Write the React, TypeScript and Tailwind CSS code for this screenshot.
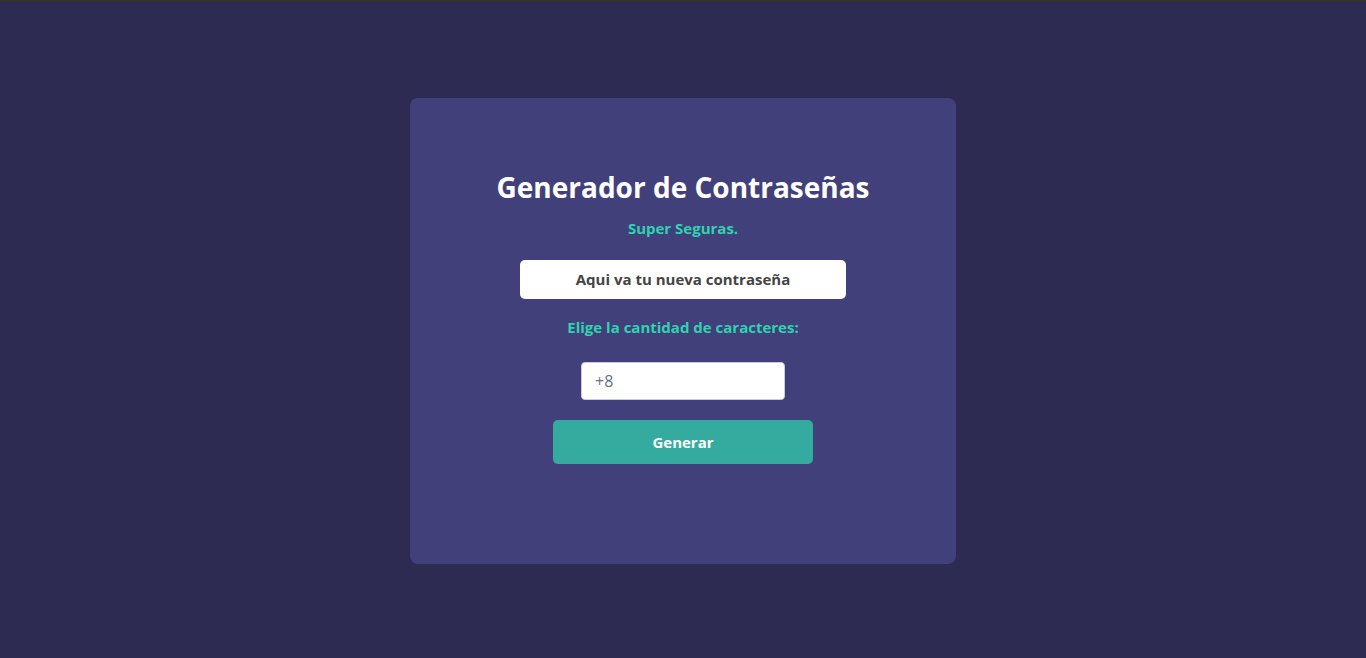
export default function App() {
  return (
    <div className="min-h-[658px] bg-[#2e2b53] border-t-2 border-[#333333] flex justify-center pt-[96px] font-['Open_Sans',sans-serif]">
      <div className="w-[546px] h-[466px] bg-[#42407a] rounded-[8px] flex flex-col items-center pt-[70px]">
        <h1 className="text-[28px] leading-[38px] font-bold text-white">Generador de Contraseñas</h1>
        <p className="mt-[12px] text-[15px] leading-[20px] font-bold text-[#2fd3b1]">Super Seguras.</p>
        <div className="mt-[22px] w-[326px] h-[39px] bg-white rounded-[5px] flex items-center justify-center text-[15px] font-bold text-[#444444]">
          Aqui va tu nueva contraseña
        </div>
        <p className="mt-[18px] text-[15px] leading-[20px] font-bold text-[#2fd3b1]">Elige la cantidad de caracteres:</p>
        <input
          type="number"
          placeholder="+8"
          className="mt-[25px] w-[204px] h-[38px] bg-white border border-[#c9ccd6] rounded-[4px] px-[13px] text-[16px] text-[#555] placeholder:text-[#6b7080] outline-none"
        />
        <button className="mt-[20px] w-[260px] h-[44px] bg-[#35aba0] rounded-[5px] text-white text-[15px] font-bold">
          Generar
        </button>
      </div>
    </div>
  )
}
